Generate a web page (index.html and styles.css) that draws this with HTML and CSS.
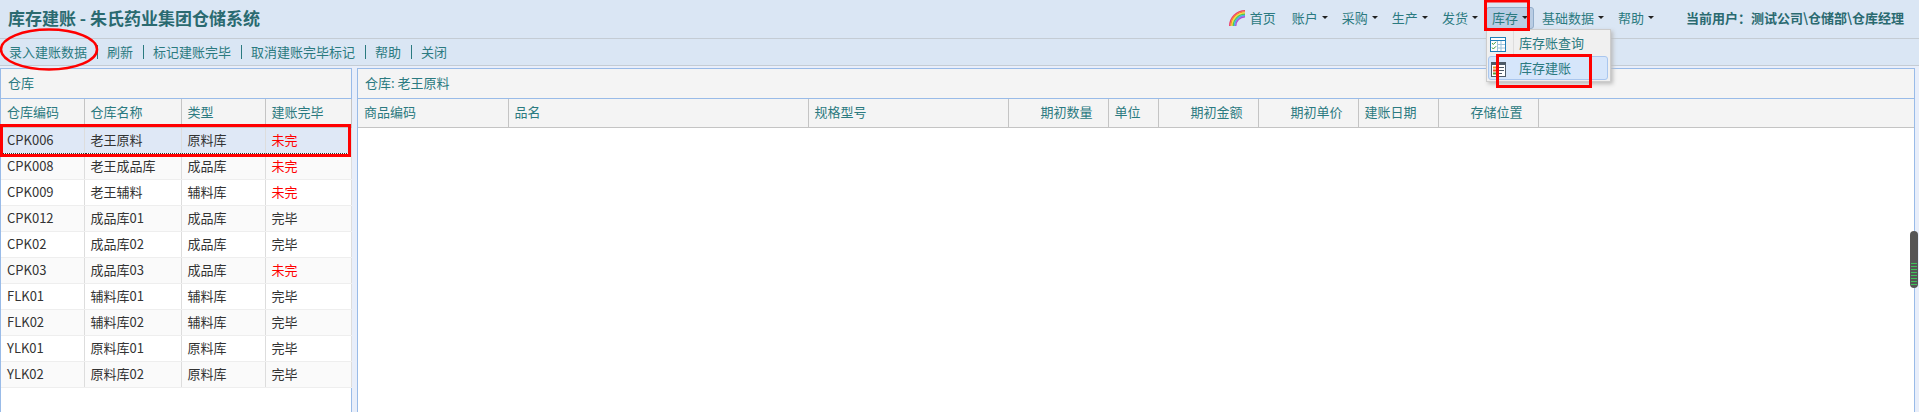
FILE: index.html
```html
<!DOCTYPE html>
<html lang="zh-CN">
<head>
  <meta charset="UTF-8" />
  <title>库存建账 - 朱氏药业集团仓储系统</title>
  <link rel="stylesheet" href="styles.css">
</head>
<body>
  <header class="topbar">
    <h1>库存建账 - 朱氏药业集团仓储系统</h1>
    <nav class="mainnav">
      <a class="nav-home">
        <svg width="16" height="16" viewBox="0 0 16 16" fill="none" stroke-width="1.4">
          <path d="M0.7 16A15.3 15.3 0 0 1 16 0.7" stroke="#ee3f6a"/>
          <path d="M1.9 16A14.1 14.1 0 0 1 16 1.9" stroke="#f58a2a"/>
          <path d="M3.1 16A12.9 12.9 0 0 1 16 3.1" stroke="#f7e23c"/>
          <path d="M4.3 16A11.7 11.7 0 0 1 16 4.3" stroke="#55c84a"/>
          <path d="M5.5 16A10.5 10.5 0 0 1 16 5.5" stroke="#45b4e8"/>
          <path d="M6.7 16A9.3 9.3 0 0 1 16 6.7" stroke="#a94fd8"/>
        </svg>
        首页
      </a>
      <a class="nav-item">账户<i class="caret"></i></a>
      <a class="nav-item">采购<i class="caret"></i></a>
      <a class="nav-item">生产<i class="caret"></i></a>
      <a class="nav-item">发货<i class="caret"></i></a>
      <a class="nav-item nav-open">库存<i class="caret"></i></a>
      <a class="nav-item">基础数据<i class="caret"></i></a>
      <a class="nav-item">帮助<i class="caret"></i></a>
      <span class="userinfo">当前用户：测试公司\仓储部\仓库经理</span>
    </nav>
  </header>

  <div class="toolbar">
    <a>录入建账数据</a>
    <a>刷新</a>
    <a>标记建账完毕</a>
    <a>取消建账完毕标记</a>
    <a>帮助</a>
    <a>关闭</a>
  </div>

  <main class="panels">
    <section class="panel panel-left">
      <div class="panel-title">仓库</div>
      <table class="grid">
        <colgroup>
          <col class="w83"><col class="w97"><col class="w84"><col class="w86">
        </colgroup>
        <thead>
          <tr><th>仓库编码</th><th>仓库名称</th><th>类型</th><th>建账完毕</th></tr>
        </thead>
        <tbody>
          <tr class="selected"><td>CPK006</td><td>老王原料</td><td>原料库</td><td class="undone">未完</td></tr>
          <tr class="alt"><td>CPK008</td><td>老王成品库</td><td>成品库</td><td class="undone">未完</td></tr>
          <tr><td>CPK009</td><td>老王辅料</td><td>辅料库</td><td class="undone">未完</td></tr>
          <tr class="alt"><td>CPK012</td><td>成品库01</td><td>成品库</td><td>完毕</td></tr>
          <tr><td>CPK02</td><td>成品库02</td><td>成品库</td><td>完毕</td></tr>
          <tr class="alt"><td>CPK03</td><td>成品库03</td><td>成品库</td><td class="undone">未完</td></tr>
          <tr><td>FLK01</td><td>辅料库01</td><td>辅料库</td><td>完毕</td></tr>
          <tr class="alt"><td>FLK02</td><td>辅料库02</td><td>辅料库</td><td>完毕</td></tr>
          <tr><td>YLK01</td><td>原料库01</td><td>原料库</td><td>完毕</td></tr>
          <tr class="alt"><td>YLK02</td><td>原料库02</td><td>原料库</td><td>完毕</td></tr>
        </tbody>
      </table>
    </section>

    <section class="panel panel-right">
      <div class="panel-title">仓库: 老王原料</div>
      <table class="grid grid-wide">
        <colgroup>
          <col class="w150"><col class="w300"><col class="w200"><col class="w100"><col class="w50">
          <col class="w100"><col class="w100"><col class="w80"><col class="w100"><col>
        </colgroup>
        <thead>
          <tr>
            <th>商品编码</th><th>品名</th><th>规格型号</th>
            <th class="num">期初数量</th><th>单位</th><th class="num">期初金额</th>
            <th class="num">期初单价</th><th>建账日期</th><th class="num">存储位置</th><th class="filler"></th>
          </tr>
        </thead>
      </table>
    </section>
  </main>

  <!-- open dropdown under 库存 -->
  <div class="menu">
    <div class="menu-line"></div>
    <a class="menu-item">
      <svg width="16" height="15" viewBox="0 0 16 15">
        <rect x="0.5" y="0.5" width="15" height="14" fill="#fff" stroke="#1f7fb8"/>
        <path d="M1 3.5h14" stroke="#1f7fb8" fill="none"/>
        <path d="M7.5 4v10M11 4v10M7 7.5h8M7 11h8" stroke="#9cc4dc" fill="none"/>
        <path d="M2 6l1.3 1.5L6 4.8M2 10.5l1.3 1.5L6 9.3" stroke="#3a9a3a" fill="none"/>
      </svg>
      库存账查询
    </a>
    <a class="menu-item menu-hover">
      <svg width="16" height="15" viewBox="0 0 16 15">
        <rect x="1.5" y="0.5" width="14" height="14" fill="#fff" stroke="#4c5a68"/>
        <path d="M2 2h13" stroke="#4c5a68" stroke-width="2" fill="none"/>
        <path d="M7 5.5h7M7 8.5h7M7 11.5h5" stroke="#4c5a68" fill="none"/>
        <rect x="3" y="4.5" width="3" height="2" fill="#e0962c"/>
        <rect x="3" y="7.5" width="3" height="2" fill="#d8502a"/>
        <rect x="3" y="10.5" width="3" height="2" fill="#5a9a3a"/>
      </svg>
      库存建账
    </a>
  </div>

  <!-- red marks drawn over the screenshot -->
  <svg class="marks" width="1919" height="412" fill="none" stroke="#f00">
    <ellipse cx="49" cy="49.5" rx="48" ry="20" stroke-width="2.5"/>
    <rect x="1.5" y="125.5" width="348" height="30" stroke-width="3"/>
    <rect x="1485.5" y="1" width="43" height="28.5" stroke-width="3"/>
    <rect x="1497.5" y="55.5" width="93" height="31" stroke-width="3"/>
  </svg>

  <div class="scroll-widget"><span></span></div>
</body>
</html>
```

FILE: styles.css
```css
* {
  box-sizing: border-box;
  margin: 0;
  padding: 0;
}
html, body {
  height: 100%;
  overflow: hidden;
}
body {
  position: relative;
  display: flex;
  flex-direction: column;
  background: #e8eefa;
  font-family: "Noto Sans CJK SC", "Liberation Sans", sans-serif;
  font-size: 13px;
  color: #2b7a80;
}

/* top bar */
.topbar {
  display: flex;
  align-items: center;
  justify-content: space-between;
  height: 39px;
  padding: 0 15px 3px 8px;
  background: #dae6f4;
  border-bottom: 1px solid #c4ccd4;
}
.topbar h1 {
  font-size: 17px;
  font-weight: bold;
  color: #2a6a70;
}
.mainnav {
  display: flex;
  align-items: center;
}
.nav-home {
  display: flex;
  align-items: center;
  gap: 5px;
  margin-right: 10px;
}
.nav-item {
  display: flex;
  align-items: center;
  height: 22px;
  padding: 0 5px;
  margin-right: 2px;
  border: 1px solid transparent;
  border-radius: 3px;
}
.nav-open {
  background: #b9cde4;
  border-color: #93aecb;
}
.caret {
  width: 0;
  height: 0;
  margin-left: 4px;
  border-left: 3px solid transparent;
  border-right: 3px solid transparent;
  border-top: 3px solid #222;
}
.userinfo {
  margin-left: 24px;
  font-weight: bold;
  color: #2a6a70;
}

/* toolbar */
.toolbar {
  display: flex;
  align-items: center;
  height: 27px;
  padding-bottom: 1px;
  background: #dae6f4;
  border-bottom: 1px solid #c4ccd4;
}
.toolbar a {
  padding: 0 10px 0 9px;
  line-height: 14px;
  border-right: 1px solid #2b7a80;
}
.toolbar a:last-child {
  border-right: none;
}

/* panels */
.panels {
  flex: 1;
  display: flex;
  gap: 5px;
  padding: 2px 4px 0 0;
  min-height: 0;
}
.panel {
  background: #fff;
  border: 1px solid #99bbe8;
  border-bottom: none;
}
.panel-left {
  width: 352px;
}
.panel-right {
  flex: 1;
}
.panel-title {
  height: 30px;
  line-height: 28px;
  padding-left: 7px;
  background: #f4f4f4;
  border-bottom: 1px solid #99bbe8;
}

/* tables */
.grid {
  width: 350px;
  table-layout: fixed;
  border-collapse: collapse;
}
.grid-wide {
  width: 100%;
}
.w50 { width: 50px; }
.w80 { width: 80px; }
.w83 { width: 83px; }
.w84 { width: 84px; }
.w86 { width: 86px; }
.w97 { width: 97px; }
.w100 { width: 100px; }
.w150 { width: 150px; }
.w200 { width: 200px; }
.w300 { width: 300px; }
.grid th {
  height: 28px;
  padding: 0 6px 2px;
  font-weight: normal;
  text-align: left;
  background: #f4f4f4;
  border-right: 1px solid #c4c4c4;
  border-bottom: 1px solid #c4c4c4;
}
.grid th.num {
  text-align: right;
  padding-right: 15px;
}
.grid th.filler {
  border-right: none;
}
.grid td {
  height: 26px;
  padding: 0 6px 2px;
  color: #333;
  border-right: 1px solid #ddd;
  border-bottom: 1px solid #eee;
}
.grid tr.alt td {
  background: #fafafa;
}
.grid tr.selected td {
  background: #dfe8f6;
  border-bottom: 1px dotted #333;
}
.grid td.undone {
  color: #f00;
}

/* dropdown */
.menu {
  position: absolute;
  left: 1486px;
  top: 29px;
  width: 125px;
  height: 53px;
  padding: 1px 2px 1px 1px;
  background: #f0f0f0;
  border: 1px solid #ccc;
  box-shadow: 2px 2px 4px #bbb;
}
.menu-line {
  position: absolute;
  left: 26px;
  top: 1px;
  width: 1px;
  height: 24px;
  background: #ddd;
}
.menu-item {
  display: flex;
  align-items: center;
  gap: 13px;
  height: 24px;
  padding: 0 0 2px 1px;
  border: 1px solid transparent;
  border-radius: 3px;
}
.menu-item svg {
  margin-top: 4px;
}
.menu-hover {
  margin-top: 1px;
  background: #d6e6fb;
  border-color: #a9c6ee;
}

/* overlays */
.marks {
  position: absolute;
  left: 0;
  top: 0;
  pointer-events: none;
}
.scroll-widget {
  position: absolute;
  left: 1910px;
  top: 231px;
  width: 8px;
  height: 57px;
  padding-top: 32px;
  background: #555;
  border-radius: 4px;
}
.scroll-widget span {
  display: block;
  height: 22px;
  margin: 0 1px;
  background: repeating-linear-gradient(#3fc25a 0 1px, #555 1px 3px);
}
```
